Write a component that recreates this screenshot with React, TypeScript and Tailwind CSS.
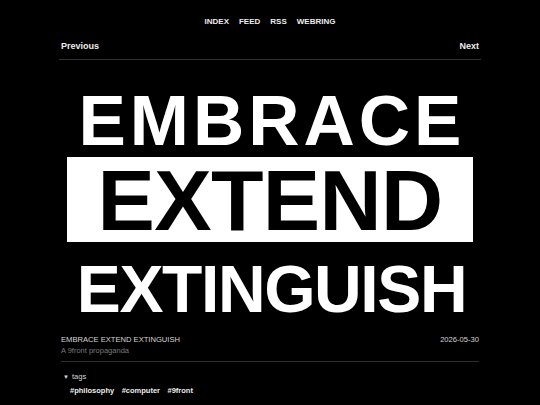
import React from "react";

export default function App() {
  return (
    <div className="min-h-screen w-full bg-black font-['Liberation_Sans',Arial,sans-serif] text-[#e5e5e5] antialiased">
      <nav className="flex justify-center gap-[10px] pt-[17px] text-[8px] font-bold leading-[10px] text-[#ececec]">
        <a>INDEX</a>
        <a>FEED</a>
        <a>RSS</a>
        <a>WEBRING</a>
      </nav>
      <div className="mx-auto w-[422px]">
        <div className="mt-[13px] flex justify-between px-[2px] text-[9px] font-bold leading-[12px] text-[#ececec]">
          <a>Previous</a>
          <a>Next</a>
        </div>
        <div className="mt-[7px] h-px bg-[#2e2e2e]" />

        <div className="flex flex-col items-center font-bold text-white">
          <div className="mt-[24.7px] pl-[4px] text-[71px] leading-[71px] tracking-[4px]">EMBRACE</div>
          <div className="mt-px flex h-[85px] w-[406px] justify-center bg-white pt-[2px]">
            <span className="text-[86px] leading-[83px] tracking-[-0.6px] text-black">EXTEND</span>
          </div>
          <div className="mt-[14.7px] pl-[3px] text-[66px] leading-[66px] tracking-[-1.4px]">EXTINGUISH</div>
        </div>

        <div className="mt-[12.6px] flex justify-between px-[2px] text-[7.6px] leading-[10px] text-[#d6d6d6]">
          <span>EMBRACE EXTEND EXTINGUISH</span>
          <span>2026-05-30</span>
        </div>
        <div className="mt-[1.3px] px-[2px] text-[7.5px] leading-[10px] text-[#7a7a7a]">A 9front propaganda</div>
        <div className="mx-[2px] mt-[4.7px] h-px bg-[#2e2e2e]" />

        <div className="mt-[10px] flex items-center px-[4px] text-[7.5px] leading-[10px] text-[#d6d6d6]">
          <span className="mr-[3px] text-[6px]">▼</span>
          <span>tags</span>
        </div>
        <div className="mt-[4.5px] flex gap-[7.5px] pl-[11px] text-[7.5px] font-bold leading-[10px] text-[#ededed]">
          <a>#philosophy</a>
          <a>#computer</a>
          <a>#9front</a>
        </div>
      </div>
    </div>
  );
}
